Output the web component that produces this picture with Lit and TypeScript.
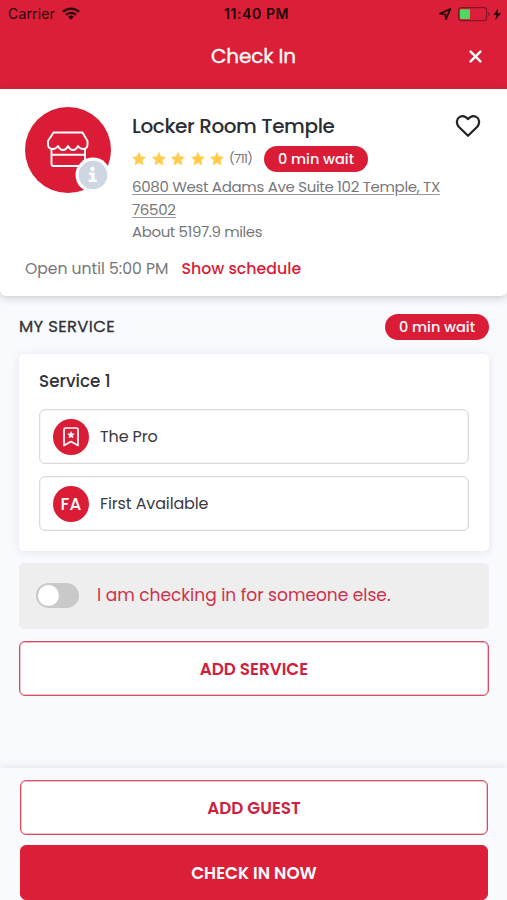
import { LitElement, html, css, svg } from "lit";
import { customElement, property } from "lit/decorators.js";

const star = svg`<path d="M7 .6l1.9 4.1 4.500.5-3.300 3.100.9 4.500L7 10.600l-4 2.200.9-4.500L.6 5.200l4.500-.5z"/>`;

@customElement("wait-pill")
class WaitPill extends LitElement {
  static styles = css`
    :host {
      display: flex;
      flex: none;
      align-items: center;
      justify-content: center;
      width: 104px;
      height: 26px;
      border-radius: 13px;
      background: #da1c37;
      color: #fff;
      font-size: 14.5px;
      font-weight: 500;
      white-space: nowrap;
    }
  `;
  render() {
    return html`<slot></slot>`;
  }
}

@customElement("service-field")
class ServiceField extends LitElement {
  @property() label = "";
  static styles = css`
    :host {
      display: flex;
      align-items: center;
      box-sizing: border-box;
      height: 55px;
      padding-left: 13px;
      gap: 11px;
      border: 1px solid #d9dcde;
      border-radius: 6px;
      background: #fff;
      box-shadow: inset 0 0 0 0.5px #e6e8ea;
      color: #3a3a3d;
      font-size: 16px;
      letter-spacing: -0.13px;
    }
    .badge {
      display: flex;
      align-items: center;
      justify-content: center;
      width: 36px;
      height: 36px;
      border-radius: 50%;
      background: #da1c37;
      color: #fff;
      font-weight: 500;
      font-size: 17px;
      letter-spacing: 0.3px;
    }
  `;
  render() {
    return html`<span class="badge"><slot></slot></span><span>${this.label}</span>`;
  }
}

@customElement("app-root")
class AppRoot extends LitElement {
  static styles = css`
    :host {
      display: flex;
      flex-direction: column;
      width: 507px;
      height: 900px;
      overflow: hidden;
      background: #f9fafe;
      color: #323236;
      font-family: Poppins, Inter, "Open Sans", sans-serif;
      white-space: nowrap;
    }
    * { box-sizing: border-box; }
    svg { display: block; flex: none; }
    header { height: 89px; background: #db1f39; }
    .status {
      display: grid;
      grid-template-columns: 1fr auto 1fr;
      align-items: center;
      height: 27px;
      padding: 0 5px 0 8px;
      color: #2a060b;
      font: 14px Inter, sans-serif;
    }
    .carrier, .power { display: flex; align-items: center; }
    .carrier { gap: 7px; letter-spacing: 0.15px; }
    .clock { padding-left: 3px; font-weight: 600; letter-spacing: 0.6px; color: #1d0407; }
    .power { justify-content: flex-end; }
    .nav {
      display: grid;
      grid-template-columns: 1fr auto 1fr;
      align-items: center;
      height: 58px;
      padding: 0 25px;
      color: #fff;
    }
    .nav h1 { grid-column: 2; margin: 0; font-size: 20px; font-weight: 400; letter-spacing: -0.15px; -webkit-text-stroke: 0.3px #fff; }
    .close { justify-self: end; }
    .salon {
      flex: none;
      height: 207px;
      padding: 18px 25px 0;
      background: #fff;
      border-radius: 0 0 6px 6px;
      box-shadow: 0 2px 8px rgba(50, 55, 70, 0.24);
    }
    .top { display: flex; gap: 21px; height: 151px; }
    .avatar { position: relative; width: 86px; height: 86px; flex: none; }
    .info { position: absolute; left: 50px; top: 50px; }
    .details { flex: 1; color: #77777a; }
    .name {
      display: flex;
      justify-content: space-between;
      align-items: center;
      height: 37px;
      padding-right: 1px;
      color: #2c2d33;
      font-size: 20px;
      font-weight: 500;
    }
    .name span { letter-spacing: -0.4px; }
    .rating { display: flex; align-items: center; height: 30px; }
    .stars { display: flex; gap: 5.5px; fill: #ffcd4e; stroke: #ffcd4e; stroke-width: 0.7; stroke-linejoin: round; }
    .count { width: 40px; padding-left: 5px; font-size: 13px; letter-spacing: -0.8px; }
    .address {
      padding-top: 1px;
      line-height: 23px;
      font-size: 15px;
      letter-spacing: -0.32px;
      text-decoration: underline #98989b;
      text-underline-offset: 2px;
    }
    .distance { line-height: 21px; font-size: 15px; letter-spacing: -0.4px; }
    .hours { display: flex; gap: 13px; line-height: 21px; font-size: 15.6px; color: #77777a; }
    .hours a { color: #da1c37; font-weight: 500; font-size: 15.8px; }
    main { padding: 18px 18px 0 19px; }
    .heading { display: flex; justify-content: space-between; align-items: center; height: 26px; font-size: 16.5px; }
    .heading > span { padding-bottom: 1px; letter-spacing: 0.32px; -webkit-text-stroke: 0.3px currentColor; }
    .card {
      display: flex;
      flex-direction: column;
      gap: 12px;
      height: 197px;
      margin-top: 14px;
      padding: 15px 20px 0;
      background: #fff;
      border-radius: 5px;
      box-shadow: 0 1px 9px rgba(60, 75, 95, 0.12);
    }
    .card h2 { margin: 0 0 4px; height: 24px; line-height: 25px; font-size: 16.8px; font-weight: 500; }
    .else {
      display: flex;
      align-items: center;
      height: 66px;
      margin-top: 12px;
      padding: 0 17px 2px;
      gap: 18px;
      background: #eee;
      border-radius: 5px;
      color: #cf314c;
      font-size: 17px;
    }
    .toggle { width: 43px; height: 25px; padding: 2px; border-radius: 13px; background: #c9c9c9; }
    .knob { width: 21px; height: 21px; border-radius: 50%; background: #fff; }
    .button {
      display: flex;
      align-items: center;
      justify-content: center;
      height: 55px;
      border: 1px solid #d94b61;
      border-radius: 6px;
      background: #fff;
      box-shadow: inset 0 0 0 0.5px #e58592;
      color: #cd213d;
      font-size: 16.8px;
      font-weight: 600;
    }
    .add { margin-top: 12px; }
    .filled { background: #db1f39; border-color: #db1f39; box-shadow: none; color: #fff; }
    footer {
      display: flex;
      flex-direction: column;
      gap: 10px;
      height: 132px;
      margin-top: auto;
      padding: 12px 19px 0 20px;
      background: #f9fafe;
      box-shadow: 0 -2px 7px rgba(50, 55, 70, 0.1);
    }
  `;

  render() {
    return html`
      <header>
        <div class="status">
          <div class="carrier">
            <span>Carrier</span>
            <svg width="18" height="13" viewBox="0 0 18 13" fill="none" stroke="currentColor" stroke-width="2.3">
              <path d="M1 4.800a11.500 11.500 0 0 1 16 0M4 7.900a7.200 7.200 0 0 1 10 0"/>
              <path d="M9 12.700L6.200 9.900a4 4 0 0 1 5.600 0z" fill="currentColor" stroke="none"/>
            </svg>
          </div>
          <span class="clock">11:40 PM</span>
          <div class="power">
            <svg width="64" height="16" viewBox="0 0 64 16">
              <path d="M2.200 7.600L12.300 3 8 13 7.300 8.300z" fill="none" stroke="#1d0407" stroke-width="1.700" stroke-linejoin="round"/>
              <rect x="20.600" y="1.600" width="28" height="13" rx="2.500" fill="none" stroke="#86132a" stroke-width="1.200"/>
              <rect x="22" y="3.300" width="10" height="9.600" rx="1" fill="#4ed964"/>
              <path d="M50.300 6v4.400q1.400-.6 1.400-2.200T50.300 6z" fill="#86132a"/>
              <path d="M60 2.500L55.500 9h3l-1.200 5L63 7.200h-3.600z" fill="#1d0407"/>
            </svg>
          </div>
        </div>
        <div class="nav">
          <h1>Check In</h1>
          <svg class="close" width="13" height="13" viewBox="0 0 13 13" stroke="#fff" stroke-width="2.400" stroke-linecap="round">
            <path d="M1.600 1.600l9.800 9.800M11.400 1.600l-9.800 9.800"/>
          </svg>
        </div>
      </header>
      <section class="salon">
        <div class="top">
          <div class="avatar">
            <svg width="86" height="86" viewBox="0 0 86 86" fill="none" stroke="#fff" stroke-width="1.900" stroke-linejoin="round">
              <circle cx="43" cy="43" r="43" fill="#da1c37" stroke="none"/>
              <path d="M28.500 25.500h29l5 8.500v3.500q0 4.500-4.500 4.500-3 0-5-3-2 4-5 4t-5-4q-2 4-5 4t-5-4q-2 3-5 3-5 0-5-4.500V34z"/>
              <path d="M26.500 42v15a2 2 0 0 0 2 2h29.500a2 2 0 0 0 2-2V42M26.500 47.800H60"/>
            </svg>
            <svg class="info" width="36" height="36" viewBox="0 0 36 36">
              <circle cx="18" cy="18" r="17.500" fill="#fff"/>
              <circle cx="18" cy="18" r="14.300" fill="#ced6e1"/>
              <circle cx="17.500" cy="12" r="2.300" fill="#fff"/>
              <path d="M14 15.500h5.700v7h2V25h-8v-2.500h2.300V18h-2z" fill="#fff"/>
            </svg>
          </div>
          <div class="details">
            <div class="name">
              <span>Locker Room Temple</span>
              <svg width="26" height="24" viewBox="0 0 26 24" fill="none" stroke="#222226" stroke-width="2.200" stroke-linejoin="round">
                <path d="M13 21.800L3.700 12.700C.8 9.300 1.600 4.600 4.700 2.900c3-1.600 6.100-.6 8.300 2.200 2.200-2.800 5.300-3.800 8.300-2.200 3.100 1.700 3.900 6.400 1 9.800z"/>
              </svg>
            </div>
            <div class="rating">
              <div class="stars">
                ${[1, 2, 3, 4, 5].map(() => html`<svg width="14" height="14" viewBox="0 0 14 14">${star}</svg>`)}
              </div>
              <span class="count">(711)</span>
              <wait-pill>0 min wait</wait-pill>
            </div>
            <div class="address">6080 West Adams Ave Suite 102 Temple, TX<br>76502</div>
            <div class="distance">About 5197.9 miles</div>
          </div>
        </div>
        <div class="hours"><span>Open until 5:00 PM</span><a>Show schedule</a></div>
      </section>
      <main>
        <div class="heading"><span>MY SERVICE</span><wait-pill>0 min wait</wait-pill></div>
        <div class="card">
          <h2>Service 1</h2>
          <service-field label="The Pro">
            <svg width="18" height="20" viewBox="0 0 18 20" fill="none" stroke="#fff" stroke-width="1.700" stroke-linejoin="round">
              <path d="M2 2.500a1.500 1.500 0 0 1 1.500-1.500h11A1.500 1.500 0 0 1 16 2.500V18.500l-7-4-7 4z"/>
              <path d="M9 4.500l1 2.200 2.400.2-1.800 1.600.5 2.400L9 9.700l-2.100 1.200.5-2.400-1.800-1.600 2.400-.2z" fill="#fff" stroke-width=".5"/>
            </svg>
          </service-field>
          <service-field label="First Available">FA</service-field>
        </div>
        <div class="else">
          <div class="toggle"><div class="knob"></div></div>
          <span>I am checking in for someone else.</span>
        </div>
        <div class="button add">ADD SERVICE</div>
      </main>
      <footer>
        <div class="button">ADD GUEST</div>
        <div class="button filled">CHECK IN NOW</div>
      </footer>
    `;
  }
}
